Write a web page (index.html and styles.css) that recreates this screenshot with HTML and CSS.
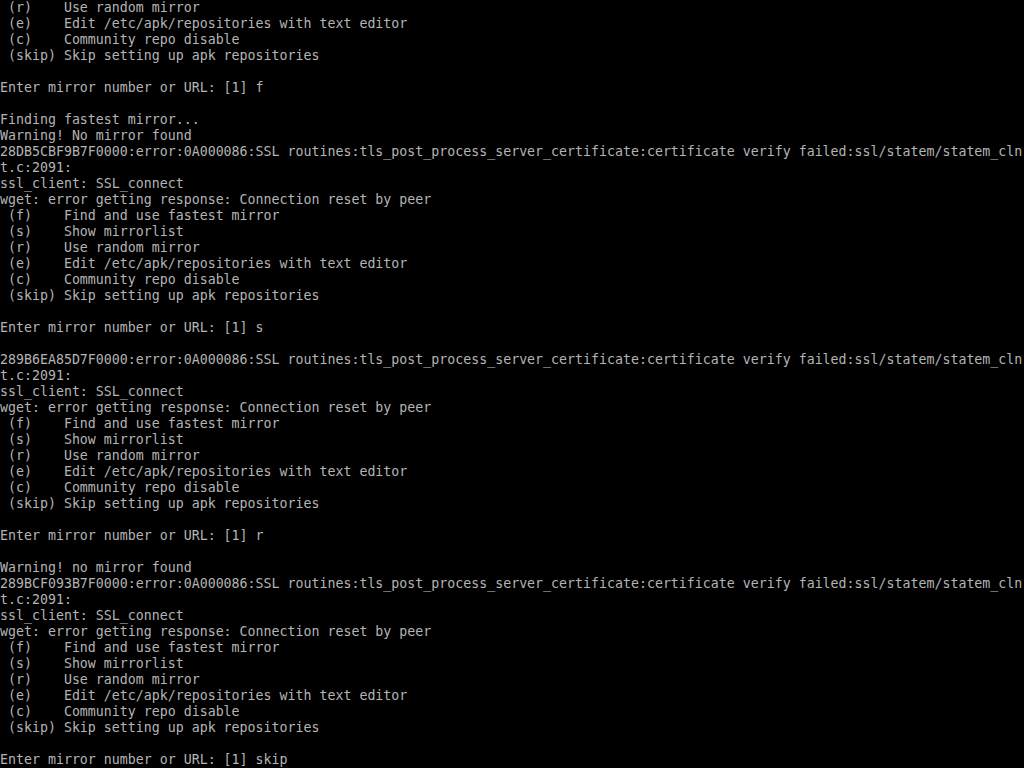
FILE: index.html
```html
<!DOCTYPE html>
<html lang="en">
<head>
  <meta charset="UTF-8" />
  <title>Console</title>
  <link rel="stylesheet" href="styles.css">
</head>
<body>
<pre class="console"> (r)    Use random mirror
 (e)    Edit /etc/apk/repositories with text editor
 (c)    Community repo disable
 (skip) Skip setting up apk repositories

Enter mirror number or URL: [1] f

Finding fastest mirror...
Warning! No mirror found
28DB5CBF9B7F0000:error:0A000086:SSL routines:tls_post_process_server_certificate:certificate verify failed:ssl/statem/statem_cln
t.c:2091:
ssl_client: SSL_connect
wget: error getting response: Connection reset by peer
 (f)    Find and use fastest mirror
 (s)    Show mirrorlist
 (r)    Use random mirror
 (e)    Edit /etc/apk/repositories with text editor
 (c)    Community repo disable
 (skip) Skip setting up apk repositories

Enter mirror number or URL: [1] s

289B6EA85D7F0000:error:0A000086:SSL routines:tls_post_process_server_certificate:certificate verify failed:ssl/statem/statem_cln
t.c:2091:
ssl_client: SSL_connect
wget: error getting response: Connection reset by peer
 (f)    Find and use fastest mirror
 (s)    Show mirrorlist
 (r)    Use random mirror
 (e)    Edit /etc/apk/repositories with text editor
 (c)    Community repo disable
 (skip) Skip setting up apk repositories

Enter mirror number or URL: [1] r

Warning! no mirror found
289BCF093B7F0000:error:0A000086:SSL routines:tls_post_process_server_certificate:certificate verify failed:ssl/statem/statem_cln
t.c:2091:
ssl_client: SSL_connect
wget: error getting response: Connection reset by peer
 (f)    Find and use fastest mirror
 (s)    Show mirrorlist
 (r)    Use random mirror
 (e)    Edit /etc/apk/repositories with text editor
 (c)    Community repo disable
 (skip) Skip setting up apk repositories

Enter mirror number or URL: [1] skip</pre>
</body>
</html>
```

FILE: styles.css
```css
* {
  box-sizing: border-box;
}

html,
body {
  margin: 0;
  padding: 0;
  background: #000;
  width: 1024px;
  height: 768px;
  overflow: hidden;
}

.console {
  margin: 0;
  padding: 0;
  font-family: "DejaVu Sans Mono", "Liberation Mono", monospace;
  font-size: 13.28px;
  line-height: 16px;
  color: #b4b4b4;
  white-space: pre;
}
```
